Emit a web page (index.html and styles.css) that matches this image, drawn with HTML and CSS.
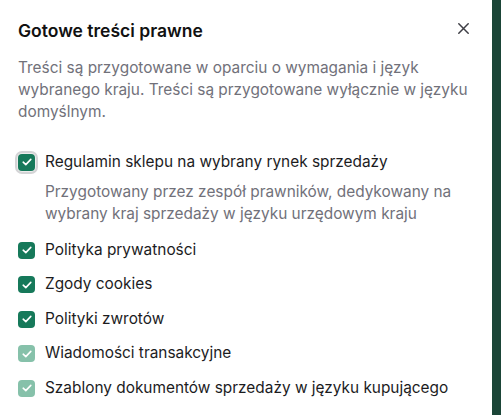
FILE: index.html
```html
<!DOCTYPE html>
<html lang="pl">
<head>
<meta charset="utf-8">
<link rel="stylesheet" href="styles.css">
</head>
<body>
<div class="page">
  <section class="dialog">
    <header class="head">
      <h1 class="title">Gotowe treści prawne</h1>
      <button class="close" aria-label="Zamknij">
        <svg width="11" height="11" viewBox="0 0 11 11"><path d="M0.8 0.8L10.2 10.2M10.2 0.8L0.8 10.2" stroke="#3f3f46" stroke-width="1.5" stroke-linecap="round"/></svg>
      </button>
    </header>
    <p class="lead">Treści są przygotowane w oparciu o wymagania i język wybranego kraju. Treści są przygotowane wyłącznie w języku domyślnym.</p>
    <ul class="list">
      <li class="item">
        <div class="row">
          <span class="box focus"><svg width="10" height="8" viewBox="0 0 10 8"><path d="M1.2 4.2L3.8 6.6L8.8 1.4" fill="none" stroke="#fff" stroke-width="1.6" stroke-linecap="round" stroke-linejoin="round"/></svg></span>
          <span class="label">Regulamin sklepu na wybrany rynek sprzedaży</span>
        </div>
        <p class="desc">Przygotowany przez zespół prawników, dedykowany na wybrany kraj sprzedaży w języku urzędowym kraju</p>
      </li>
      <li class="item">
        <div class="row">
          <span class="box"><svg width="10" height="8" viewBox="0 0 10 8"><path d="M1.2 4.2L3.8 6.6L8.8 1.4" fill="none" stroke="#fff" stroke-width="1.6" stroke-linecap="round" stroke-linejoin="round"/></svg></span>
          <span class="label">Polityka prywatności</span>
        </div>
      </li>
      <li class="item">
        <div class="row">
          <span class="box"><svg width="10" height="8" viewBox="0 0 10 8"><path d="M1.2 4.2L3.8 6.6L8.8 1.4" fill="none" stroke="#fff" stroke-width="1.6" stroke-linecap="round" stroke-linejoin="round"/></svg></span>
          <span class="label">Zgody cookies</span>
        </div>
      </li>
      <li class="item">
        <div class="row">
          <span class="box"><svg width="10" height="8" viewBox="0 0 10 8"><path d="M1.2 4.2L3.8 6.6L8.8 1.4" fill="none" stroke="#fff" stroke-width="1.6" stroke-linecap="round" stroke-linejoin="round"/></svg></span>
          <span class="label">Polityki zwrotów</span>
        </div>
      </li>
      <li class="item">
        <div class="row">
          <span class="box light"><svg width="10" height="8" viewBox="0 0 10 8"><path d="M1.2 4.2L3.8 6.6L8.8 1.4" fill="none" stroke="#fff" stroke-width="1.6" stroke-linecap="round" stroke-linejoin="round"/></svg></span>
          <span class="label">Wiadomości transakcyjne</span>
        </div>
      </li>
      <li class="item">
        <div class="row">
          <span class="box light"><svg width="10" height="8" viewBox="0 0 10 8"><path d="M1.2 4.2L3.8 6.6L8.8 1.4" fill="none" stroke="#fff" stroke-width="1.6" stroke-linecap="round" stroke-linejoin="round"/></svg></span>
          <span class="label">Szablony dokumentów sprzedaży w języku kupującego</span>
        </div>
      </li>
    </ul>
  </section>
  <div class="stripe"></div>
</div>
</body>
</html>
```
FILE: styles.css
```css
* { box-sizing: border-box; }
html, body { margin: 0; padding: 0; }
body {
  font-family: Inter, "Noto Sans", sans-serif;
  background: #fff;
  color: #1c1c1e;
  width: 501px;
  height: 415px;
  overflow: hidden;
}
.page {
  display: flex;
  height: 415px;
}
.dialog {
  flex: 1;
  padding: 18px 18px 0 18px;
}
.stripe {
  width: 9px;
  background: #1b4537;
}
.head {
  display: flex;
  justify-content: space-between;
  align-items: flex-start;
}
.title {
  margin: 0;
  font-size: 17.5px;
  line-height: 25px;
  font-weight: 600;
  color: #111;
}
.close {
  border: 0;
  background: none;
  padding: 0;
  margin: 4.5px 5px 0 0;
  width: 11px;
  height: 11px;
  display: flex;
}
.lead {
  margin: 14px 0 0 0;
  font-size: 15.4px;
  line-height: 21.75px;
  color: #71717a;
}
.list {
  list-style: none;
  margin: 28.5px 0 0 0;
  padding: 0;
  display: flex;
  flex-direction: column;
  gap: 12px;
}
.row {
  display: flex;
  align-items: center;
  gap: 10px;
}
.box {
  width: 17px;
  height: 17px;
  border-radius: 4px;
  background: #16795a;
  display: flex;
  align-items: center;
  justify-content: center;
  flex: none;
}
.box.focus {
  box-shadow: 0 0 0 1px #ececec, 0 0 0 3px #d4d4d6;
}
.box.light {
  background: #86c1aa;
}
.label {
  font-size: 15.4px;
  line-height: 22.5px;
}
.desc {
  margin: 8px 0 2.5px 27px;
  font-size: 15.4px;
  line-height: 21.5px;
  color: #71717a;
}
```
